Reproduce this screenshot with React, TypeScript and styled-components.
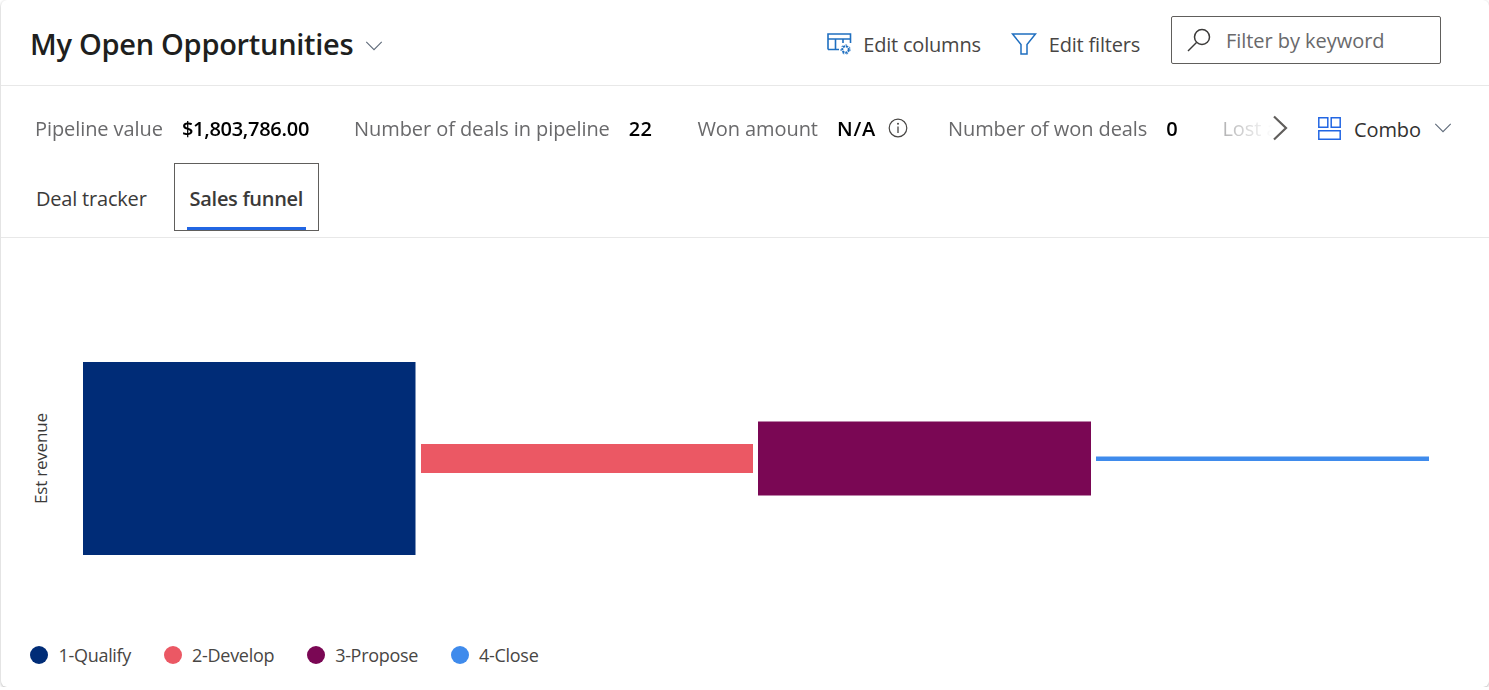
import React from "react";
import styled, { createGlobalStyle } from "styled-components";

const Global = createGlobalStyle`
  html, body { margin: 0; padding: 0; background: #fff; }
  body { font-family: "Open Sans", "Noto Sans", "Liberation Sans", sans-serif; }
`;

const Card = styled.div`
  box-sizing: border-box;
  width: 1488px;
  height: 687px;
  margin-left: 1px;
  background: #fff;
  border-radius: 6px;
  box-shadow: 0 1px 3px rgba(0, 0, 0, 0.3);
  display: flex;
  flex-direction: column;
  overflow: hidden;
`;

const Header = styled.header`
  flex: none;
  height: 86px;
  box-sizing: border-box;
  border-bottom: 1px solid #e8e8e8;
  display: flex;
  align-items: center;
  padding: 5px 48px 0 29px;
`;

const Title = styled.h1`
  margin: -4px 0 0;
  font-size: 29px;
  font-weight: 600;
  color: #201f1e;
  letter-spacing: -0.28px;
  white-space: nowrap;
`;

const TitleCaret = styled.span`
  display: flex;
  margin-left: 12px;
  margin-top: 1px;
`;

const Actions = styled.div`
  margin-left: auto;
  display: flex;
  align-items: center;
`;

const Action = styled.button<{ $gap: number; $right: number }>`
  border: 0;
  background: none;
  padding: 0;
  display: flex;
  align-items: center;
  gap: ${(p) => p.$gap}px;
  margin: -2px ${(p) => p.$right}px 0 0;
  font: inherit;
  font-size: 20px;
  letter-spacing: -0.2px;
  color: #484644;
  white-space: nowrap;
`;

const Search = styled.div`
  box-sizing: border-box;
  width: 270px;
  height: 48px;
  margin-top: -10px;
  border: 1px solid #605e5c;
  border-radius: 2px;
  display: flex;
  align-items: center;
  padding: 0 0 0 14px;
  gap: 14px;
  font-size: 20px;
  letter-spacing: -0.05px;
  color: #69696b;
`;

const StatsRow = styled.div`
  flex: none;
  height: 77px;
  box-sizing: border-box;
  display: flex;
  align-items: center;
  padding: 7px 0 0 34px;
  position: relative;
`;

const StatsViewport = styled.div`
  width: 1256px;
  overflow: hidden;
  display: flex;
  gap: 45px;
  white-space: nowrap;
  -webkit-mask-image: linear-gradient(to right, #000 1150px, rgba(0,0,0,.5) 1188px, transparent 1238px);
  mask-image: linear-gradient(to right, #000 1150px, rgba(0,0,0,.5) 1188px, transparent 1238px);
`;

const Stat = styled.div`
  flex: none;
  display: flex;
  align-items: center;
  gap: 19px;
  font-size: 20px;
  letter-spacing: -0.08px;
`;

const StatLabel = styled.span`
  color: #69696b;
`;

const StatValue = styled.span<{ $spacing?: number }>`
  color: #000;
  font-weight: 600;
  letter-spacing: ${(p) => p.$spacing ?? -0.27}px;
`;

const InfoIcon = styled.span`
  display: flex;
  margin: -1px -5px 0 -7px;
`;

const Chevron = styled.span`
  position: absolute;
  left: 1270px;
  top: 29px;
  display: flex;
`;

const ViewPicker = styled.div`
  position: absolute;
  left: 1317px;
  top: 27px;
  display: flex;
  align-items: center;
  font-size: 20px;
  letter-spacing: -0.1px;
  color: #323130;
`;

const ViewLabel = styled.span`
  margin: 3px 13px 0 13px;
`;

const Tabs = styled.nav`
  flex: none;
  height: 75px;
  box-sizing: border-box;
  border-bottom: 1px solid #e8e8e8;
  display: flex;
  align-items: flex-start;
  padding-left: 34px;
  gap: 26px;
`;

const Tab = styled.div<{ $active?: boolean }>`
  position: relative;
  box-sizing: border-box;
  height: 68px;
  display: flex;
  align-items: center;
  padding-top: 3px;
  font-size: 20px;
  color: #3b3a39;
  letter-spacing: ${(p) => (p.$active ? "-0.3px" : "-0.2px")};
  font-weight: ${(p) => (p.$active ? 600 : 400)};
  padding-left: ${(p) => (p.$active ? "15px" : "0")};
  padding-right: ${(p) => (p.$active ? "15px" : "0")};
  border: ${(p) => (p.$active ? "1px solid #605e5c" : "1px solid transparent")};
`;

const TabBar = styled.span`
  position: absolute;
  left: 12px;
  right: 12px;
  bottom: 0;
  height: 3px;
  background: #2266e3;
`;

const ChartArea = styled.main`
  flex: 1;
  min-height: 0;
`;

const ChartSvg = styled.svg`
  display: block;
`;

const AxisLabel = styled.text`
  font-family: "Open Sans", "Noto Sans", sans-serif;
  font-size: 17px;
  letter-spacing: -0.2px;
  fill: #3b3a39;
`;

const Legend = styled.div`
  flex: none;
  height: 45px;
  padding: 0 0 20px 29px;
  box-sizing: border-box;
  display: flex;
  align-items: center;
  gap: 32.5px;
`;

const LegendItem = styled.div`
  display: flex;
  align-items: center;
  gap: 10.5px;
  font-size: 18px;
  letter-spacing: -0.3px;
  color: #484644;
`;

const Dot = styled.span<{ $color: string }>`
  width: 18px;
  height: 18px;
  border-radius: 50%;
  background: ${(p) => p.$color};
`;

const Caret = ({ color = "#5f6b7a", w = 18 }: { color?: string; w?: number }) => (
  <svg width={w} height="10" viewBox="0 0 19 11" fill="none">
    <path d="M1 1l8.500 8.500L18 1" stroke={color} strokeWidth="1.200" />
  </svg>
);

const legend = [
  { label: "1-Qualify", color: "#002c77" },
  { label: "2-Develop", color: "#eb5864" },
  { label: "3-Propose", color: "#7a0754" },
  { label: "4-Close", color: "#3f8bec" },
];

export default function App() {
  return (
    <>
      <Global />
      <Card>
        <Header>
          <Title>My Open Opportunities</Title>
          <TitleCaret>
            <Caret />
          </TitleCaret>
          <Actions>
            <Action $gap={11} $right={30}>
              <svg width="25" height="24" viewBox="0 0 25 24" fill="none">
                <path d="M1 17.500V2h22.500v9M1 7h22.500M8.500 7v10.500M16 7v4M1 17.500h11" stroke="#1f6fc0" strokeWidth="1.600" />
                <circle cx="18.500" cy="17.500" r="3.200" stroke="#1f6fc0" strokeWidth="2" strokeDasharray="2.200 .8" />
                <circle cx="18.500" cy="17.500" r="4.600" stroke="#1f6fc0" strokeWidth="1" strokeDasharray="1.800 2.400" />
              </svg>
              Edit columns
            </Action>
            <Action $gap={12} $right={31}>
              <svg width="26" height="24" viewBox="0 0 26 24" fill="none">
                <path d="M1.500 2h23l-8.500 10.500V22h-6V12.500z" stroke="#1f6fc0" strokeWidth="1.500" />
              </svg>
              Edit filters
            </Action>
            <Search>
              <svg width="26" height="26" viewBox="0 0 26 26" fill="none">
                <circle cx="16" cy="10" r="7.500" stroke="#3b3a39" strokeWidth="1.500" />
                <path d="M10.500 15.500L2 24" stroke="#3b3a39" strokeWidth="1.500" />
              </svg>
              Filter by keyword
            </Search>
          </Actions>
        </Header>

        <StatsRow>
          <StatsViewport>
            <Stat>
              <StatLabel>Pipeline value</StatLabel>
              <StatValue>$1,803,786.00</StatValue>
            </Stat>
            <Stat>
              <StatLabel>Number of deals in pipeline</StatLabel>
              <StatValue $spacing={0.4}>22</StatValue>
            </Stat>
            <Stat>
              <StatLabel>Won amount</StatLabel>
              <StatValue $spacing={0.8}>N/A</StatValue>
              <InfoIcon>
                <svg width="20" height="20" viewBox="0 0 20 20" fill="none">
                  <circle cx="10" cy="10" r="8.800" stroke="#484644" strokeWidth="1.200" />
                  <path d="M10 8.500V15" stroke="#484644" strokeWidth="1.300" />
                  <circle cx="10" cy="5.800" r="1" fill="#484644" />
                </svg>
              </InfoIcon>
            </Stat>
            <Stat>
              <StatLabel>Number of won deals</StatLabel>
              <StatValue>0</StatValue>
            </Stat>
            <Stat>
              <StatLabel>Lost amount</StatLabel>
            </Stat>
          </StatsViewport>
          <Chevron>
            <svg width="18" height="26" viewBox="0 0 18 26" fill="none">
              <path d="M3 1.500L15 13 3 24.500" stroke="#605e5c" strokeWidth="2.200" />
            </svg>
          </Chevron>
          <ViewPicker>
            <svg width="23" height="23" viewBox="0 0 23 23" fill="none">
              <path d="M.8.800h9v9.400h-9zM13.200.800h9v9.400h-9zM.8 13.800h21.400v8.400H.8z" stroke="#2266e3" strokeWidth="1.500" />
            </svg>
            <ViewLabel>Combo</ViewLabel>
            <Caret />
          </ViewPicker>
        </StatsRow>

        <Tabs>
          <Tab>Deal tracker</Tab>
          <Tab $active>
            Sales funnel
            <TabBar />
          </Tab>
        </Tabs>

        <ChartArea>
          <ChartSvg width="1488" height="362" viewBox="0 238 1488 362">
            <AxisLabel transform="translate(46 504) rotate(-90)">Est revenue</AxisLabel>
            <rect x="82" y="362" width="332.500" height="193" fill="#002c77" />
            <rect x="420" y="444" width="332" height="29" fill="#eb5864" />
            <rect x="757" y="421.500" width="333" height="74" fill="#7a0754" />
            <rect x="1095" y="456.500" width="333" height="4.500" fill="#3f8bec" />
          </ChartSvg>
        </ChartArea>

        <Legend>
          {legend.map((item) => (
            <LegendItem key={item.label}>
              <Dot $color={item.color} />
              {item.label}
            </LegendItem>
          ))}
        </Legend>
      </Card>
    </>
  );
}
